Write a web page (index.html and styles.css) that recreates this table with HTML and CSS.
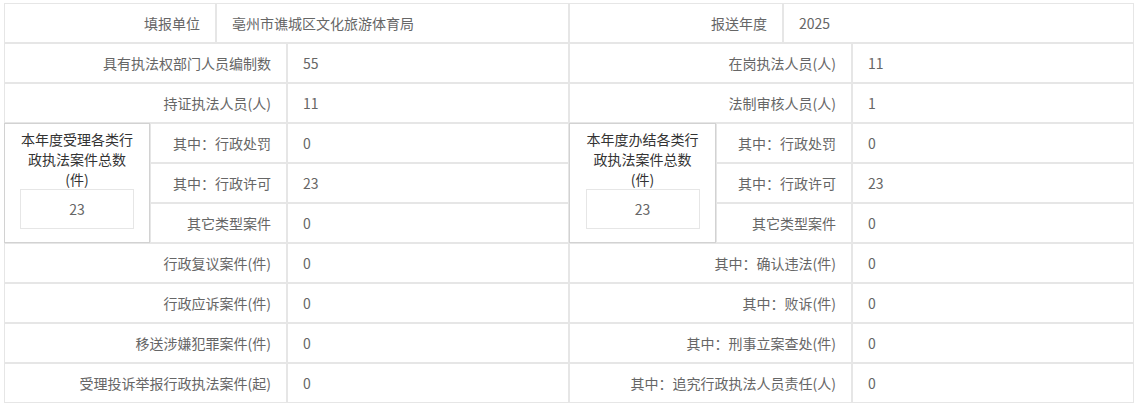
FILE: index.html
```html
<!DOCTYPE html>
<html lang="zh-CN">
<head>
<meta charset="utf-8">
<title>行政执法统计</title>
<link rel="stylesheet" href="styles.css">
</head>
<body>
<div class="sheet">
  <div class="half half-left">
    <div class="cell label top-label">填报单位</div>
    <div class="cell value top-value">亳州市谯城区文化旅游体育局</div>

    <div class="cell label wide-label">具有执法权部门人员编制数</div>
    <div class="cell value">55</div>

    <div class="cell label wide-label">持证执法人员(人)</div>
    <div class="cell value">11</div>

    <div class="block">
      <div class="block-title">本年度受理各类行政执法案件总数(件)</div>
      <div class="block-box">23</div>
    </div>
    <div class="cell label sub-label">其中：行政处罚</div>
    <div class="cell value">0</div>
    <div class="cell label sub-label">其中：行政许可</div>
    <div class="cell value">23</div>
    <div class="cell label sub-label">其它类型案件</div>
    <div class="cell value">0</div>

    <div class="cell label wide-label">行政复议案件(件)</div>
    <div class="cell value">0</div>
    <div class="cell label wide-label">行政应诉案件(件)</div>
    <div class="cell value">0</div>
    <div class="cell label wide-label">移送涉嫌犯罪案件(件)</div>
    <div class="cell value">0</div>
    <div class="cell label wide-label">受理投诉举报行政执法案件(起)</div>
    <div class="cell value">0</div>
  </div>

  <div class="half half-right">
    <div class="cell label top-label">报送年度</div>
    <div class="cell value top-value">2025</div>

    <div class="cell label wide-label">在岗执法人员(人)</div>
    <div class="cell value">11</div>

    <div class="cell label wide-label">法制审核人员(人)</div>
    <div class="cell value">1</div>

    <div class="block">
      <div class="block-title">本年度办结各类行政执法案件总数(件)</div>
      <div class="block-box">23</div>
    </div>
    <div class="cell label sub-label">其中：行政处罚</div>
    <div class="cell value">0</div>
    <div class="cell label sub-label">其中：行政许可</div>
    <div class="cell value">23</div>
    <div class="cell label sub-label">其它类型案件</div>
    <div class="cell value">0</div>

    <div class="cell label wide-label">其中：确认违法(件)</div>
    <div class="cell value">0</div>
    <div class="cell label wide-label">其中：败诉(件)</div>
    <div class="cell value">0</div>
    <div class="cell label wide-label">其中：刑事立案查处(件)</div>
    <div class="cell value">0</div>
    <div class="cell label wide-label">其中：追究行政执法人员责任(人)</div>
    <div class="cell value">0</div>
  </div>
</div>
</body>
</html>
```

FILE: styles.css
```css
* {
  box-sizing: border-box;
}

html, body {
  margin: 0;
  background: #ffffff;
}

body {
  padding: 3px 4px;
  font-family: "Noto Sans CJK SC", "Noto Sans", sans-serif;
  font-size: 14px;
  color: #666666;
}

.sheet {
  display: flex;
  width: 1130px;
}

.half {
  display: grid;
  grid-auto-rows: 40px;
  width: 565px;
}

.half-left {
  grid-template-columns: 146px 66px 71px 282px;
}

.half-right {
  grid-template-columns: 147px 67px 69px 282px;
}

.cell {
  border: 1px solid #e6e6e6;
  display: flex;
  align-items: center;
  line-height: 20px;
  white-space: nowrap;
}

.label {
  justify-content: flex-end;
  padding-right: 15px;
}

.value {
  padding-left: 15px;
  grid-column: 4;
}

.top-label {
  grid-column: 1 / 3;
}

.top-value {
  grid-column: 3 / 5;
}

.wide-label {
  grid-column: 1 / 4;
}

.sub-label {
  grid-column: 2 / 4;
}

.block {
  grid-column: 1;
  grid-row: span 3;
  border: 1px solid #d2d2d2;
  padding: 5px 0 0;
  display: flex;
  flex-direction: column;
  align-items: center;
}

.block-title {
  width: 120px;
  text-align: center;
  line-height: 20px;
  color: #333333;
}

.block-box {
  width: 114px;
  height: 40px;
  border: 1px solid #e6e6e6;
  display: flex;
  align-items: center;
  justify-content: center;
  color: #666666;
}
```
